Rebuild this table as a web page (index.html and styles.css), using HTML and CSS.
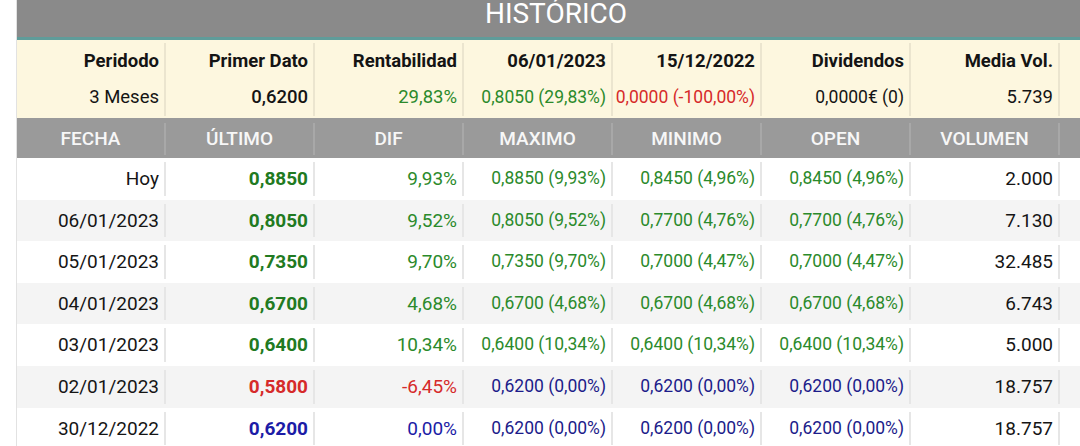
FILE: index.html
```html
<!DOCTYPE html>
<html lang="es">
<head>
<meta charset="utf-8">
<title>Histórico</title>
<link rel="stylesheet" href="styles.css">
</head>
<body>
<div class="page">
  <div class="panel">
    <div class="title">HISTÓRICO</div>
    <div class="summary">
      <div class="scol"><div class="shead">Peridodo</div><div class="sval">3 Meses</div></div>
      <div class="scol"><div class="shead">Primer Dato</div><div class="sval strong">0,6200</div></div>
      <div class="scol"><div class="shead">Rentabilidad</div><div class="sval up">29,83%</div></div>
      <div class="scol"><div class="shead">06/01/2023</div><div class="sval small up">0,8050 (29,83%)</div></div>
      <div class="scol"><div class="shead">15/12/2022</div><div class="sval small down">0,0000 (-100,00%)</div></div>
      <div class="scol"><div class="shead">Dividendos</div><div class="sval small">0,0000€ (0)</div></div>
      <div class="scol"><div class="shead">Media Vol.</div><div class="sval">5.739</div></div>
      <div class="scol"></div>
    </div>
    <div class="row head">
      <div class="cell">FECHA</div>
      <div class="cell">ÚLTIMO</div>
      <div class="cell">DIF</div>
      <div class="cell">MAXIMO</div>
      <div class="cell">MINIMO</div>
      <div class="cell">OPEN</div>
      <div class="cell">VOLUMEN</div>
      <div class="cell"></div>
    </div>
    <div class="row">
      <div class="cell">Hoy</div>
      <div class="cell b up2">0,8850</div>
      <div class="cell up">9,93%</div>
      <div class="cell sm up">0,8850 (9,93%)</div>
      <div class="cell sm up">0,8450 (4,96%)</div>
      <div class="cell sm up">0,8450 (4,96%)</div>
      <div class="cell">2.000</div>
      <div class="cell"></div>
    </div>
    <div class="row alt">
      <div class="cell">06/01/2023</div>
      <div class="cell b up2">0,8050</div>
      <div class="cell up">9,52%</div>
      <div class="cell sm up">0,8050 (9,52%)</div>
      <div class="cell sm up">0,7700 (4,76%)</div>
      <div class="cell sm up">0,7700 (4,76%)</div>
      <div class="cell">7.130</div>
      <div class="cell"></div>
    </div>
    <div class="row">
      <div class="cell">05/01/2023</div>
      <div class="cell b up2">0,7350</div>
      <div class="cell up">9,70%</div>
      <div class="cell sm up">0,7350 (9,70%)</div>
      <div class="cell sm up">0,7000 (4,47%)</div>
      <div class="cell sm up">0,7000 (4,47%)</div>
      <div class="cell">32.485</div>
      <div class="cell"></div>
    </div>
    <div class="row alt">
      <div class="cell">04/01/2023</div>
      <div class="cell b up2">0,6700</div>
      <div class="cell up">4,68%</div>
      <div class="cell sm up">0,6700 (4,68%)</div>
      <div class="cell sm up">0,6700 (4,68%)</div>
      <div class="cell sm up">0,6700 (4,68%)</div>
      <div class="cell">6.743</div>
      <div class="cell"></div>
    </div>
    <div class="row">
      <div class="cell">03/01/2023</div>
      <div class="cell b up2">0,6400</div>
      <div class="cell up">10,34%</div>
      <div class="cell sm up">0,6400 (10,34%)</div>
      <div class="cell sm up">0,6400 (10,34%)</div>
      <div class="cell sm up">0,6400 (10,34%)</div>
      <div class="cell">5.000</div>
      <div class="cell"></div>
    </div>
    <div class="row alt">
      <div class="cell">02/01/2023</div>
      <div class="cell b down">0,5800</div>
      <div class="cell down">-6,45%</div>
      <div class="cell sm flat">0,6200 (0,00%)</div>
      <div class="cell sm flat">0,6200 (0,00%)</div>
      <div class="cell sm flat">0,6200 (0,00%)</div>
      <div class="cell">18.757</div>
      <div class="cell"></div>
    </div>
    <div class="row">
      <div class="cell">30/12/2022</div>
      <div class="cell b flat2">0,6200</div>
      <div class="cell flat2">0,00%</div>
      <div class="cell sm flat">0,6200 (0,00%)</div>
      <div class="cell sm flat">0,6200 (0,00%)</div>
      <div class="cell sm flat">0,6200 (0,00%)</div>
      <div class="cell">18.757</div>
      <div class="cell"></div>
    </div>
  </div>
</div>
</body>
</html>
```

FILE: styles.css
```css
html, body {
  margin: 0;
  padding: 0;
  background: #ffffff;
  overflow: hidden;
}
body {
  font-family: Roboto, "Noto Sans", "Liberation Sans", sans-serif;
  color: #111111;
}
.page {
  padding-left: 16px;
  width: 1100px;
}
.panel {
  width: 1078px;
  border-left: 1px solid #e2e2e2;
}
.title {
  background: #8a8a8a;
  color: #ffffff;
  font-size: 28px;
  line-height: 28px;
  height: 28px;
  padding-bottom: 9px;
  text-align: center;
  border-bottom: 3px solid #5f9c9a;
}
.summary {
  display: grid;
  grid-template-columns: repeat(7, 149px) 35px;
  background: #fdf7df;
  padding: 3px 0 2px;
}
.scol {
  box-sizing: border-box;
  border-right: 2px solid #ebe5cf;
  padding-right: 5px;
  text-align: right;
  height: 73px;
}
.scol:last-child { border-right: none; }
.shead {
  font-weight: 700;
  font-size: 18.5px;
  line-height: 36px;
  color: #141414;
}
.sval {
  font-size: 18.5px;
  line-height: 37px;
  color: #141414;
}
.sval.strong { font-weight: 500; }
.sval.small { font-size: 17.5px; }
.row {
  display: grid;
  grid-template-columns: repeat(7, 149px) 35px;
  background: #ffffff;
  padding: 4px 0;
}
.row.alt { background: #f4f4f4; }
.cell {
  box-sizing: border-box;
  border-right: 2px solid #e6e6e6;
  padding-right: 5px;
  text-align: right;
  font-size: 19px;
  line-height: 33.6px;
  height: 33.6px;
  white-space: nowrap;
  color: #151515;
}
.cell:last-child { border-right: none; }
.row.head {
  background: #9a9a9a;
  padding: 5px 0 3px;
}
.row.head .cell {
  text-align: center;
  padding-right: 0;
  color: #f7f7f7;
  font-weight: 500;
  line-height: 32px;
  height: 32px;
  border-right-color: #a8a8a8;
}
.cell.b { font-weight: 700; }
.cell.sm { font-size: 17.5px; }
.up { color: #2b8a2b; }
.up2 { color: #217a21; }
.down { color: #d62a2a; }
.flat { color: #1c1c8a; }
.flat2 { color: #1c1ca6; }
```
